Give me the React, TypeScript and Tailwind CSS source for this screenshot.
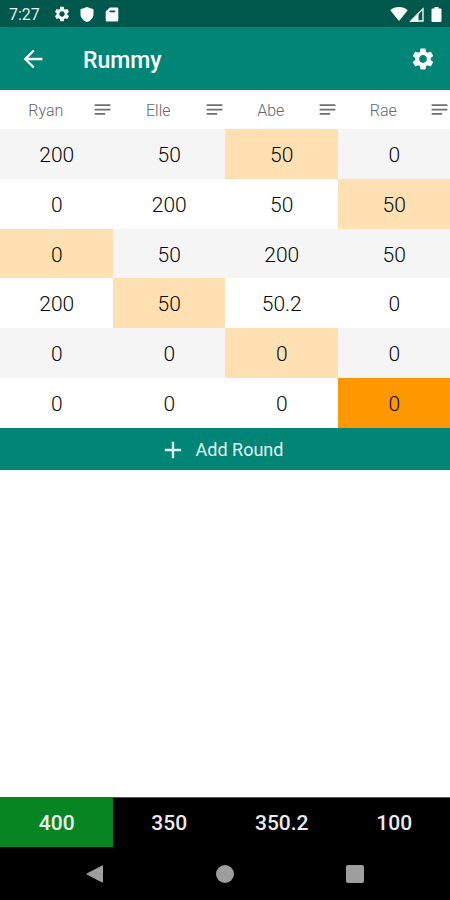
import clsx from 'clsx';
import { MdAdd, MdArrowBack, MdNotes, MdSettings } from 'react-icons/md';

interface Player {
  name: string;
  total: string;
}

const players: Player[] = [
  { name: 'Ryan', total: '400' },
  { name: 'Elle', total: '350' },
  { name: 'Abe', total: '350.2' },
  { name: 'Rae', total: '100' },
];

// dealer is the column index of the highlighted cell
const rounds = [
  { scores: ['200', '50', '50', '0'], dealer: 2 },
  { scores: ['0', '200', '50', '50'], dealer: 3 },
  { scores: ['0', '50', '200', '50'], dealer: 0 },
  { scores: ['200', '50', '50.2', '0'], dealer: 1 },
  { scores: ['0', '0', '0', '0'], dealer: 2 },
  { scores: ['0', '0', '0', '0'], dealer: 3 },
];

function cellColor(row: number, col: number) {
  if (rounds[row].dealer === col) {
    return row === rounds.length - 1 ? 'bg-[#ff9800]' : 'bg-[#ffe0b2]';
  }
  return row % 2 === 0 ? 'bg-[#f5f5f5]' : 'bg-white';
}

function StatusBar() {
  return (
    <div className="flex h-[27px] shrink-0 items-center bg-[#00574b] pl-[9px] pr-2 pt-px text-white">
      <span className="w-[44px] pt-[2px] text-[16px] leading-none text-[#e6efed]">7:27</span>
      <MdSettings className="size-[18px]" />
      <svg className="ml-[9px] h-[15px] w-[14px]" viewBox="0 0 14 15" fill="currentColor">
        <path d="M7 0L13.5 2.3V7c0 3.8-2.5 6.5-6.5 8C3 13.5.5 10.8.5 7V2.3z" />
      </svg>
      <svg className="ml-[11px] h-[15px] w-[14px]" viewBox="0 0 14 15" fill="currentColor">
        <path
          fillRule="evenodd"
          d="M4.8.5H12A1.3 1.3 0 0 1 13.3 1.8V13.2A1.3 1.3 0 0 1 12 14.5H2A1.3 1.3 0 0 1 .7 13.2V4.6zM4.5 3.6V5.2H10.3V3.6z"
        />
      </svg>
      <div className="ml-auto flex items-center">
        <svg className="h-[14px] w-[18px]" viewBox="0 0 18 14" fill="currentColor">
          <path d="M9 14L.3 3.2C2.7 1.2 5.7 0 9 0s6.3 1.2 8.7 3.2z" />
        </svg>
        <svg className="ml-px h-[15px] w-[15px]" viewBox="0 0 15 15">
          <path d="M14 1.8V14H1.8z" fill="none" stroke="currentColor" strokeWidth="1.3" />
          <path d="M1 14.5L9.5 6V14.5z" fill="currentColor" />
        </svg>
        <svg className="ml-[7px] h-[15px] w-[11px]" viewBox="0 0 11 15" fill="currentColor">
          <path d="M3.5 0h4v1.5H9.5a1 1 0 0 1 1 1V14a1 1 0 0 1-1 1H1.5a1 1 0 0 1-1-1V2.5a1 1 0 0 1 1-1H3.5z" />
        </svg>
      </div>
    </div>
  );
}

function NavBar() {
  return (
    <div className="flex h-[53px] shrink-0 items-center justify-between bg-black px-[86px] text-[#9e9e9e]">
      <svg className="size-[18px]" viewBox="0 0 18 18" fill="currentColor">
        <path d="M16.5.8v16.4L.8 9z" stroke="currentColor" strokeLinejoin="round" />
      </svg>
      <div className="size-[18px] rounded-full bg-[#9e9e9e]" />
      <div className="size-[18px] rounded-[2px] bg-[#9e9e9e]" />
    </div>
  );
}

export default function App() {
  return (
    <div className="flex h-[900px] w-[450px] flex-col overflow-hidden bg-white font-['Roboto',sans-serif]">
      <StatusBar />

      <header className="flex h-[63px] shrink-0 items-center bg-[#008577] pl-[19px] pr-[14px] text-white">
        <MdArrowBack className="size-[28px]" />
        <h1 className="ml-[36px] pt-[5px] text-[23px] font-medium">Rummy</h1>
        <MdSettings className="ml-auto size-[26px]" />
      </header>

      {/* Player names */}
      <div className="grid h-[39px] shrink-0 grid-cols-4 overflow-hidden">
        {players.map((player) => (
          <div key={player.name} className="flex items-center">
            <span className="w-[93px] pt-[3px] text-center text-[16px] font-light text-[#666]">
              {player.name}
            </span>
            <MdNotes className="size-[21px] shrink-0 text-[#707070]" />
          </div>
        ))}
      </div>

      {/* Rounds */}
      <div className="grid h-[299px] shrink-0 grid-rows-6">
        {rounds.map((round, row) => (
          <div key={row} className="grid grid-cols-4">
            {round.scores.map((score, col) => (
              <div
                key={col}
                className={clsx(
                  'flex items-center justify-center pt-[3px] pl-px text-[21px] leading-none font-light text-[#080808]',
                  cellColor(row, col)
                )}
              >
                {score}
              </div>
            ))}
          </div>
        ))}
      </div>

      <button className="flex h-[42px] shrink-0 items-center justify-center bg-[#008577] pt-px pr-[8px] text-[18px] text-[#e0f2f0]">
        <MdAdd className="mr-[9px] size-[28px]" />
        Add Round
      </button>

      {/* Totals */}
      <div className="mt-auto grid h-[50px] shrink-0 grid-cols-4 border-t border-[#555] bg-black">
        {players.map((player, i) => (
          <div
            key={player.name}
            className={clsx(
              'flex items-center justify-center pt-[2px] pl-px text-[21px] font-medium text-[#ebebeb]',
              i === 0 && 'bg-[#088523]'
            )}
          >
            {player.total}
          </div>
        ))}
      </div>

      <NavBar />
    </div>
  );
}
